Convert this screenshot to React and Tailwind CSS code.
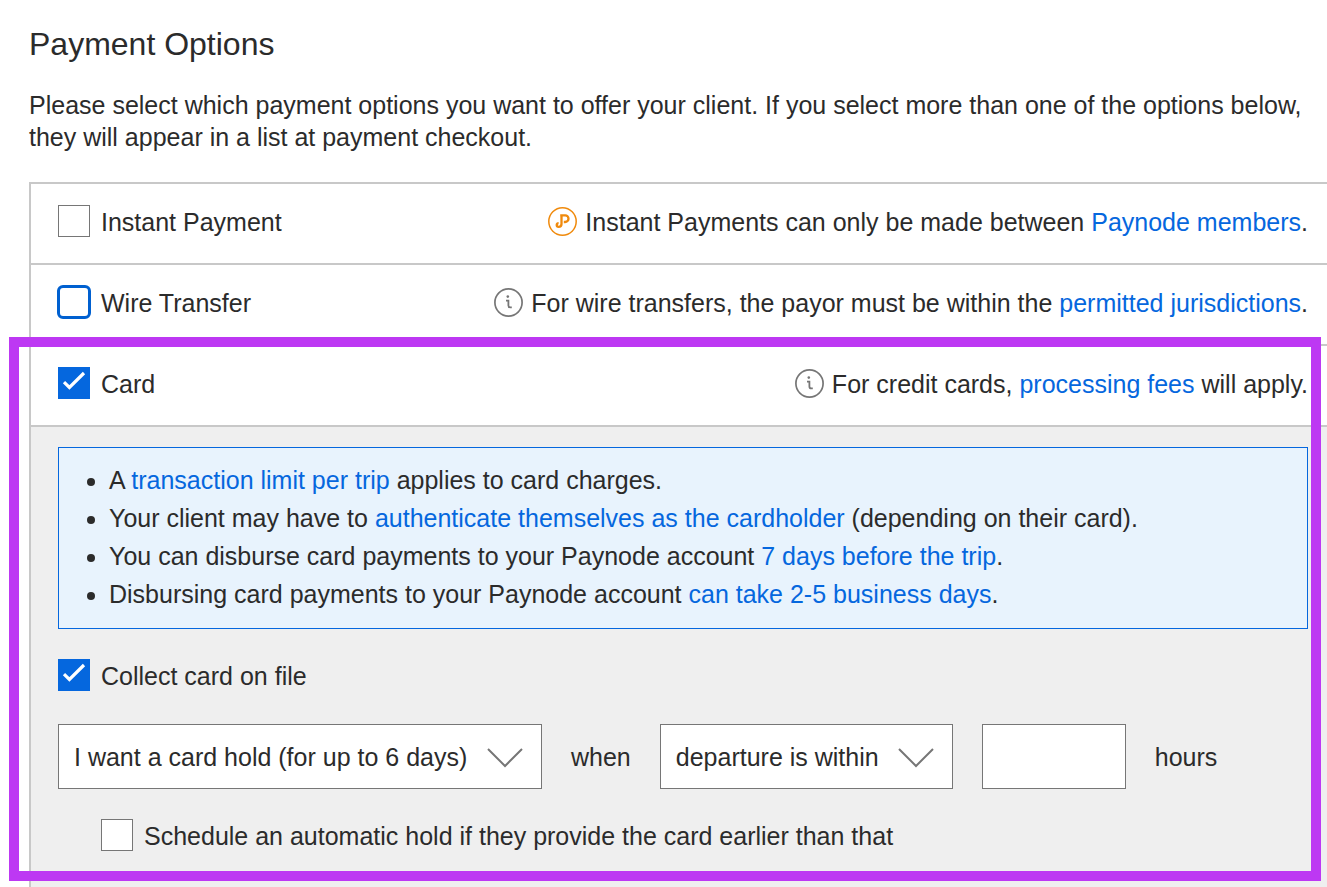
import React, { useState } from 'react';

function Checkbox({ id, checked, onChange, focused }) {
  return (
    <span className="relative block w-8 h-8 shrink-0">
      <input
        id={id}
        type="checkbox"
        checked={checked}
        onChange={(e) => onChange(e.target.checked)}
        className={`
          block w-8 h-8 appearance-none border cursor-pointer
          checked:bg-[#0567de] checked:border-[#0567de]
          ${focused
            ? 'rounded-[5px] border-[#0060d0] bg-white outline-3 -outline-offset-2 outline-[#0060d0]'
            : 'border-[#767676] bg-white'}
        `}
      />
      {checked && (
        <svg viewBox="0 0 32 32" className="absolute inset-0 w-8 h-8 pointer-events-none" fill="none">
          <path d="M6 15.2 11.4 20.4 26 6" stroke="#fff" strokeWidth="3.2" />
        </svg>
      )}
    </span>
  );
}

function InfoIcon() {
  return (
    <svg viewBox="0 0 29 29" className="w-[29px] h-[29px] shrink-0" fill="none" stroke="#767676">
      <circle cx="14.5" cy="14.5" r="13.6" strokeWidth="1.7" />
      <circle cx="13.8" cy="8.6" r="1.3" fill="#767676" stroke="none" />
      <path d="M12 12.6H14.4V17.4Q14.4 19.4 16.4 19.4H17.8" strokeWidth="1.8" />
    </svg>
  );
}

function PaynodeIcon() {
  return (
    <svg viewBox="0 0 29 29" className="w-[29px] h-[29px] shrink-0" fill="none" stroke="#f08a0c">
      <circle cx="14.5" cy="14.5" r="13.7" strokeWidth="1.5" />
      <path
        d="M12.2 8.4H17.2A3.3 3.3 0 0 1 17.2 15H15.8M13.5 8.4V17A2.9 2.9 0 0 1 10.6 19.9A1.9 1.9 0 0 1 10.6 16.1"
        strokeWidth="2.3"
      />
    </svg>
  );
}

function Link({ children }) {
  return (
    <a href="#" className="text-[#0567de] hover:underline">
      {children}
    </a>
  );
}

function OptionRow({ id, label, checked, onChange, focused, icon, children }) {
  return (
    <div className="flex items-center justify-between h-[81px] pl-[27px] pr-[19px] pb-1 border-t-2 border-[#c8c8c8]">
      <div className="flex items-center gap-[11px] pb-0.5">
        <Checkbox id={id} checked={checked} onChange={onChange} focused={focused} />
        <label htmlFor={id} className="pt-0.5">{label}</label>
      </div>
      <div className="flex items-center gap-2">
        {icon}
        <p>{children}</p>
      </div>
    </div>
  );
}

function Dropdown({ label, options, className }) {
  return (
    <div className={`relative ${className}`}>
      <select
        aria-label={label}
        className="block w-full h-[65px] pl-[15px] pr-[60px] appearance-none bg-white border border-[#767676]"
      >
        {options.map((option) => (
          <option key={option}>{option}</option>
        ))}
      </select>
      <svg
        viewBox="0 0 36 20"
        className="absolute right-[19px] top-6 w-9 h-5 pointer-events-none"
        fill="none"
        stroke="#767676"
        strokeWidth="2"
      >
        <path d="M1 1 18 18 35 1" />
      </svg>
    </div>
  );
}

export default function App() {
  const [instant, setInstant] = useState(false);
  const [wire, setWire] = useState(false);
  const [card, setCard] = useState(true);
  const [collect, setCollect] = useState(true);
  const [schedule, setSchedule] = useState(false);
  const [hours, setHours] = useState('');

  return (
    <main className="pl-[29px] pt-6 bg-white text-[#2b2b2b] text-[25px] leading-8 font-['Liberation_Sans',Arial,sans-serif] overflow-hidden">
      <h1 className="text-[32px] leading-10">Payment Options</h1>
      <p className="pt-[25px] pb-[29px] pr-2">
        Please select which payment options you want to offer your client. If you select more than one of
        the options below, they will appear in a list at payment checkout.
      </p>

      <div className="border-l-2 border-[#c8c8c8]">
        <OptionRow id="instant" label="Instant Payment" checked={instant} onChange={setInstant} icon={<PaynodeIcon />}>
          Instant Payments can only be made between <Link>Paynode members</Link>.
        </OptionRow>
        <OptionRow id="wire" label="Wire Transfer" checked={wire} onChange={setWire} focused icon={<InfoIcon />}>
          For wire transfers, the payor must be within the <Link>permitted jurisdictions</Link>.
        </OptionRow>

        <section className="relative">
          <OptionRow id="card" label="Card" checked={card} onChange={setCard} icon={<InfoIcon />}>
            For credit cards, <Link>processing fees</Link> will apply.
          </OptionRow>

          <div className="pt-5 pb-[35px] pl-[27px] pr-[19px] bg-[#efefef] border-t-2 border-[#c8c8c8]">
            <ul className="pt-[13px] pb-[15px] pl-[50px] list-disc leading-[38px] bg-[#e8f3fd] border border-[#0567de]">
              <li>A <Link>transaction limit per trip</Link> applies to card charges.</li>
              <li>
                Your client may have to <Link>authenticate themselves as the cardholder</Link> (depending on
                their card).
              </li>
              <li>You can disburse card payments to your Paynode account <Link>7 days before the trip</Link>.</li>
              <li>Disbursing card payments to your Paynode account <Link>can take 2-5 business days</Link>.</li>
            </ul>

            <div className="flex items-center gap-[11px] pt-[29px]">
              <Checkbox id="collect" checked={collect} onChange={setCollect} />
              <label htmlFor="collect" className="pt-0.5">Collect card on file</label>
            </div>

            <div className="flex items-center gap-[29px] pt-8">
              <Dropdown
                label="Card hold"
                options={['I want a card hold (for up to 6 days)']}
                className="w-[484px]"
              />
              <span>when</span>
              <Dropdown label="Hold condition" options={['departure is within']} className="w-[293px]" />
              <input
                id="hours"
                type="text"
                value={hours}
                onChange={(e) => setHours(e.target.value)}
                className="w-36 h-[65px] px-4 bg-white border border-[#767676]"
              />
              <label htmlFor="hours">hours</label>
            </div>

            <div className="flex items-center gap-[11px] pt-[29px] pl-[43px]">
              <Checkbox id="schedule" checked={schedule} onChange={setSchedule} />
              <label htmlFor="schedule" className="pt-0.5">
                Schedule an automatic hold if they provide the card earlier than that
              </label>
            </div>
          </div>

          {/* Highlight frame around the card section */}
          <div className="absolute -top-[7px] -left-[22px] right-[6px] bottom-[6px] border-10 border-[#bd38f3] pointer-events-none" />
        </section>
      </div>
    </main>
  );
}
